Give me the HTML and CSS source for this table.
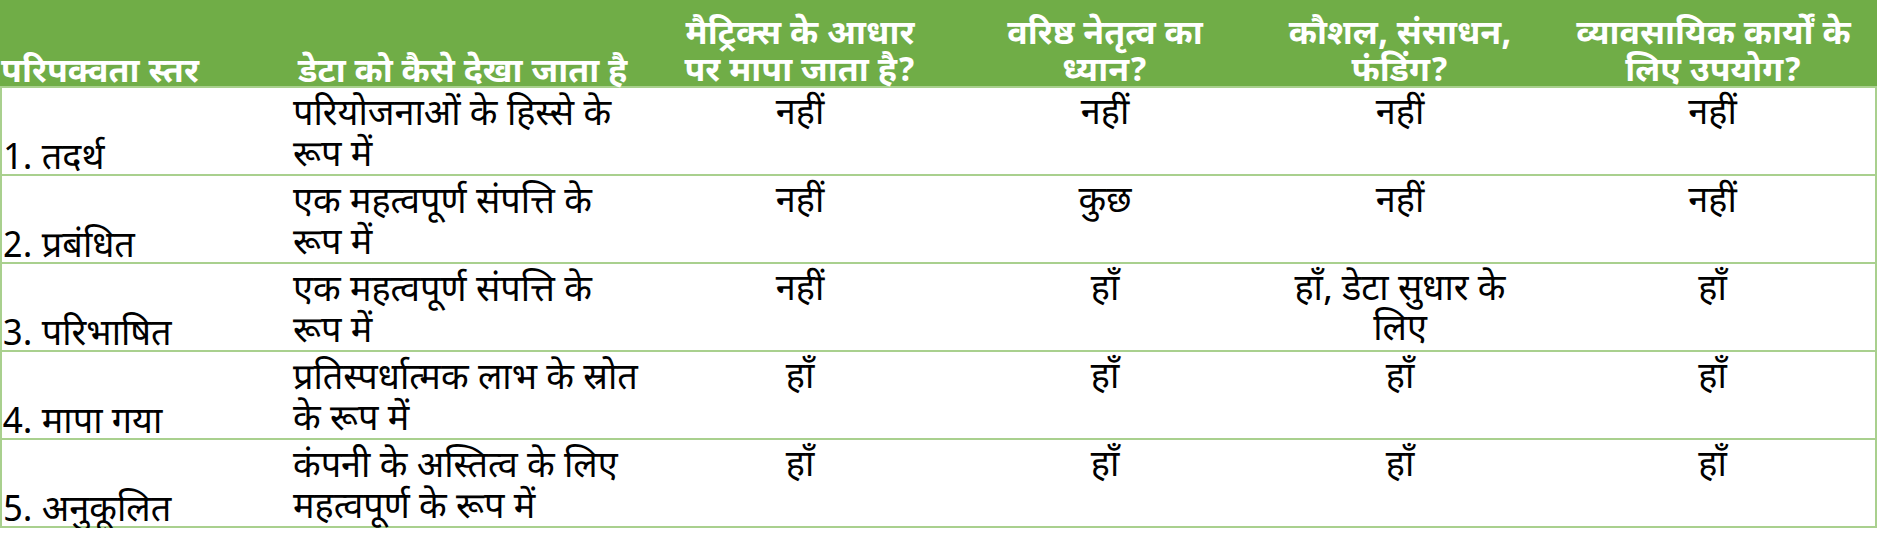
FILE: index.html
```html
<!DOCTYPE html>
<html lang="hi">
<head>
<meta charset="utf-8">
<link rel="stylesheet" href="styles.css">
</head>
<body>
<div class="maturity" role="table">
  <div class="hcell left single">परिपक्वता स्तर</div>
  <div class="hcell left second single">डेटा को कैसे देखा जाता है</div>
  <div class="hcell">मैट्रिक्स के आधार<br>पर मापा जाता है?</div>
  <div class="hcell">वरिष्ठ नेतृत्व का<br>ध्यान?</div>
  <div class="hcell">कौशल, संसाधन,<br>फंडिंग?</div>
  <div class="hcell last">व्यावसायिक कार्यों के<br>लिए उपयोग?</div>

  <div class="cell level">1. तदर्थ</div>
  <div class="cell view">परियोजनाओं के हिस्से के<br>रूप में</div>
  <div class="cell">नहीं</div><div class="cell">नहीं</div><div class="cell">नहीं</div><div class="cell last">नहीं</div>

  <div class="cell level">2. प्रबंधित</div>
  <div class="cell view">एक महत्वपूर्ण संपत्ति के<br>रूप में</div>
  <div class="cell">नहीं</div><div class="cell">कुछ</div><div class="cell">नहीं</div><div class="cell last">नहीं</div>

  <div class="cell level">3. परिभाषित</div>
  <div class="cell view">एक महत्वपूर्ण संपत्ति के<br>रूप में</div>
  <div class="cell">नहीं</div><div class="cell">हाँ</div><div class="cell">हाँ, डेटा सुधार के<br>लिए</div><div class="cell last">हाँ</div>

  <div class="cell level">4. मापा गया</div>
  <div class="cell view">प्रतिस्पर्धात्मक लाभ के स्रोत<br>के रूप में</div>
  <div class="cell">हाँ</div><div class="cell">हाँ</div><div class="cell">हाँ</div><div class="cell last">हाँ</div>

  <div class="cell level">5. अनुकूलित</div>
  <div class="cell view">कंपनी के अस्तित्व के लिए<br>महत्वपूर्ण के रूप में</div>
  <div class="cell">हाँ</div><div class="cell">हाँ</div><div class="cell">हाँ</div><div class="cell last">हाँ</div>
</div>
</body>
</html>
```

FILE: styles.css
```css
html, body {
  margin: 0;
  padding: 0;
  background: #ffffff;
}

.maturity {
  width: 1877px;
  display: grid;
  grid-template-columns: 290px 350px 320px 290px 300px 327px;
  grid-template-rows: 88px repeat(5, 88px);
  font-family: "Noto Sans Devanagari", "Noto Sans", "Lohit Devanagari", "Liberation Sans", sans-serif;
  font-size: 36px;
  line-height: 40px;
  color: #000000;
}

.hcell {
  background: #70ad47;
  color: #ffffff;
  font-size: 34px;
  font-weight: 700;
  line-height: 37px;
  padding: 18px 4px 0;
  text-align: center;
  white-space: nowrap;
  box-sizing: border-box;
  border-bottom: 2px solid #a9d08e;
}

.hcell.single {
  padding-top: 56px;
}

.hcell.left {
  text-align: left;
  padding-left: 1px;
}

.hcell.second {
  padding-left: 8px;
}

.cell {
  box-sizing: border-box;
  padding: 8px 4px 0;
  text-align: center;
  white-space: nowrap;
  border-bottom: 2px solid #a9d08e;
}

.cell.level {
  text-align: left;
  padding-top: 53px;
  padding-left: 1px;
  border-left: 2px solid #a9d08e;
}

.cell.view {
  text-align: left;
  padding-left: 3px;
  line-height: 41px;
}

.cell.last {
  border-right: 2px solid #a9d08e;
}
```
